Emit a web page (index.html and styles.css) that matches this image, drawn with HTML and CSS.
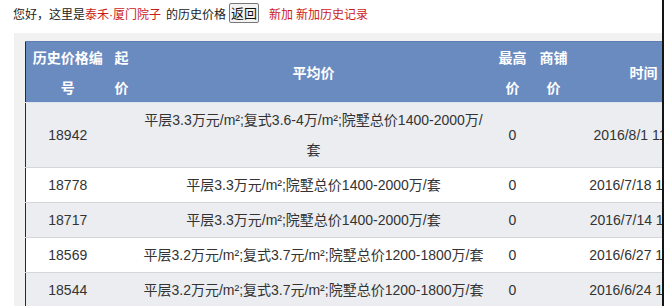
FILE: index.html
```html
<!DOCTYPE html>
<html lang="zh-CN">
<head>
<meta charset="utf-8">
<title>历史价格</title>
<link rel="stylesheet" href="styles.css">
</head>
<body>
<div class="topbar">
  <span>您好，这里是</span><span class="red">泰禾·厦门院子</span><span class="sp">的历史价格</span>
  <button class="btn">返回</button>
  <a class="red link">新加</a><a class="red link2">新加历史记录</a>
</div>
<div class="panel">
  <table class="grid">
    <colgroup>
      <col class="c1"><col class="c2"><col class="c3"><col class="c4"><col class="c5"><col class="c6">
    </colgroup>
    <thead>
      <tr><th>历史价格编号</th><th>起价</th><th>平均价</th><th>最高价</th><th>商铺价</th><th>时间</th></tr>
    </thead>
    <tbody>
      <tr class="odd"><td>18942</td><td></td><td>平层3.3万元/m²;复式3.6-4万/m²;院墅总价1400-2000万/套</td><td>0</td><td></td><td class="time">2016/8/1 11:02:15</td></tr>
      <tr><td>18778</td><td></td><td>平层3.3万元/m²;院墅总价1400-2000万/套</td><td>0</td><td></td><td class="time">2016/7/18 15:38:28</td></tr>
      <tr class="odd"><td>18717</td><td></td><td>平层3.3万元/m²;院墅总价1400-2000万/套</td><td>0</td><td></td><td class="time">2016/7/14 11:20:46</td></tr>
      <tr><td>18569</td><td></td><td>平层3.2万元/m²;复式3.7元/m²;院墅总价1200-1800万/套</td><td>0</td><td></td><td class="time">2016/6/27 16:12:09</td></tr>
      <tr class="odd"><td>18544</td><td></td><td>平层3.2万元/m²;复式3.7元/m²;院墅总价1200-1800万/套</td><td>0</td><td></td><td class="time">2016/6/24 10:41:37</td></tr>
    </tbody>
  </table>
</div>
</body>
</html>
```
FILE: styles.css
```css
html {
  overflow: hidden;
  border-right: 2px solid #141414;
  background: #fff;
}
body {
  margin: 0;
  font-family: "Liberation Sans", "Noto Sans CJK SC", sans-serif;
  color: #222;
}
.topbar {
  display: flex;
  align-items: center;
  height: 20px;
  margin: 3px 0 0 13px;
  font-size: 12px;
  white-space: nowrap;
}
.red { color: #cc1a1a; }
.sp { margin-left: 5px; }
.btn {
  margin: 0 0 0 3px;
  height: 20px;
  width: 30px;
  padding: 0;
  font-family: "Noto Sans CJK SC", sans-serif;
  font-size: 13px;
  line-height: 18px;
  color: #111;
  background: #f3f3f3;
  border: 1px solid #777;
  border-radius: 2px;
}
.link { margin-left: 10px; }
.link2 { margin-left: 3px; }
.panel {
  margin: 10px 0 0 14px;
  padding: 8px 0 0 11px;
  width: 760px;
  height: 300px;
  background: #f1f1f1;
}
.grid {
  table-layout: fixed;
  width: 686px;
  border-collapse: collapse;
  border-left: 1px solid #2a2a2a;
  font-size: 14px;
}
.c1 { width: 84px; }
.c2 { width: 24px; }
.c3 { width: 360px; }
.c4 { width: 38px; }
.c5 { width: 44px; }
.c6 { width: 136px; }
.grid th {
  height: 60px;
  padding: 0 5px;
  background: #6a8bc0;
  color: #fff;
  font-family: "Noto Sans CJK SC", sans-serif;
  font-weight: 700;
  font-size: 14px;
  line-height: 30px;
  text-align: center;
  vertical-align: middle;
  border-top: 1px solid #5d7db3;
  border-bottom: 1px solid #dfe3ea;
}
.grid td {
  padding: 2px 5px;
  line-height: 30px;
  text-align: center;
  vertical-align: middle;
  color: #333;
  background: #fff;
  border-top: 1px solid #d4d6da;
}
.grid td.time {
  padding: 2px 0 2px 12px;
  white-space: nowrap;
}
.grid tr.odd td { background: #ebedf1; }
```
